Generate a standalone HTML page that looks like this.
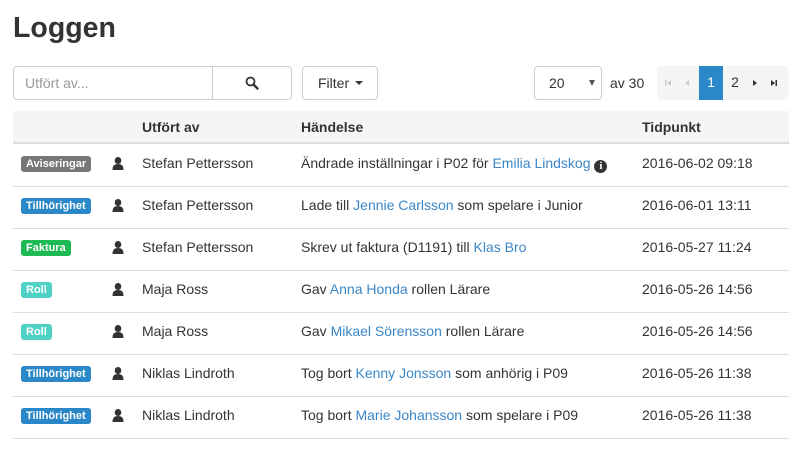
<!DOCTYPE html>
<html><head><meta charset="utf-8"><style>
*{box-sizing:border-box;margin:0;padding:0}
body{width:800px;height:450px;background:#fff;font-family:"Liberation Sans",Arial,sans-serif;font-size:14px;color:#333;position:relative;overflow:hidden}
.a{position:absolute;white-space:nowrap}
h1{position:absolute;left:13px;top:12px;font-size:28.5px;font-weight:bold;color:#333}
.box{position:absolute;border:1px solid #ccc;border-radius:4px;background:#fff}
.hdr{position:absolute;left:13px;top:111px;width:776px;height:33px;background:#f5f5f5;border-bottom:2px solid #ddd}
.th{position:absolute;top:119px;font-weight:bold}
.line{position:absolute;left:13px;width:776px;height:1px;background:#ddd}
.badge{position:absolute;left:21px;height:16px;line-height:16px;padding:0 5px;border-radius:3px;color:#fff;font-size:11px;font-weight:bold}
a{color:#3b87c8;text-decoration:none}
.pg{position:absolute;top:66px;height:33px;line-height:33px;text-align:center;font-size:14px}
</style></head><body>
<h1>Loggen</h1>
<div class="box" style="left:13px;top:66px;width:279px;height:34px"></div>
<div class="a" style="left:212px;top:67px;width:1px;height:32px;background:#ccc"></div>
<div class="a" style="left:25px;top:75px;color:#999">Utfört av...</div>
<svg class="a" style="left:245px;top:76px" width="14" height="14" viewBox="0 0 14 14"><circle cx="5.5" cy="5.5" r="4" fill="none" stroke="#333" stroke-width="1.8"/><path d="M8.5 8.5L12.5 12.5" stroke="#333" stroke-width="2.4" stroke-linecap="round"/></svg>
<div class="box" style="left:302px;top:66px;width:76px;height:34px"></div>
<div class="a" style="left:318px;top:75px">Filter</div>
<div class="a" style="left:355px;top:81px;width:0;height:0;border-left:4px solid transparent;border-right:4px solid transparent;border-top:4px solid #333"></div>
<div class="box" style="left:534px;top:66px;width:68px;height:34px"></div>
<div class="a" style="left:549px;top:75px">20</div>
<div class="a" style="left:589px;top:80px;width:0;height:0;border-left:3.5px solid transparent;border-right:3.5px solid transparent;border-top:6px solid #555"></div>
<div class="a" style="left:610px;top:75px">av 30</div>
<div class="a" style="left:657px;top:66px;width:132px;height:34px;background:#f5f5f5;border-radius:4px"></div>
<div class="a" style="left:699px;top:66px;width:24px;height:34px;background:#2a88c8"></div>
<div class="pg" style="left:699px;width:24px;color:#fff">1</div>
<div class="pg" style="left:723px;width:24px">2</div>
<svg class="a" style="left:663px;top:78px" width="120" height="10" viewBox="0 0 120 10">
<g fill="#ccc"><rect x="2" y="2" width="1.5" height="6"/><path d="M8 2v6L4 5z"/><path d="M26 2v6L22 5z"/></g>
<g fill="#333"><path d="M90 2v6l4-3z"/><path d="M108 2v6l4-3z"/><rect x="112.5" y="2" width="1.5" height="6"/></g>
</svg>
<div class="hdr"></div>
<div class="th" style="left:142px">Utfört av</div>
<div class="th" style="left:301px">Händelse</div>
<div class="th" style="left:642px">Tidpunkt</div>

<div class="badge" style="top:156px;background:#777">Aviseringar</div>
<div class="badge" style="top:198px;background:#2a88c8">Tillhörighet</div>
<div class="badge" style="top:240px;background:#1cb955">Faktura</div>
<div class="badge" style="top:282px;background:#4fd1c5">Roll</div>
<div class="badge" style="top:324px;background:#4fd1c5">Roll</div>
<div class="badge" style="top:366px;background:#2a88c8">Tillhörighet</div>
<div class="badge" style="top:408px;background:#2a88c8">Tillhörighet</div>

<svg class="a" style="left:112px;top:157px" width="12" height="270" viewBox="0 0 12 270">
<defs><g id="u"><ellipse cx="6" cy="3.5" rx="3.3" ry="3.5" fill="#333"/><path d="M0.5 13c0-4 1.5-6 5.5-6s5.5 2 5.5 6z" fill="#333"/></g></defs>
<use href="#u" y="0"/><use href="#u" y="42"/><use href="#u" y="84"/><use href="#u" y="126"/><use href="#u" y="168"/><use href="#u" y="210"/><use href="#u" y="252"/>
</svg>

<div class="a" style="left:142px;top:155px">Stefan Pettersson</div>
<div class="a" style="left:142px;top:197px">Stefan Pettersson</div>
<div class="a" style="left:142px;top:239px">Stefan Pettersson</div>
<div class="a" style="left:142px;top:281px">Maja Ross</div>
<div class="a" style="left:142px;top:323px">Maja Ross</div>
<div class="a" style="left:142px;top:365px">Niklas Lindroth</div>
<div class="a" style="left:142px;top:407px">Niklas Lindroth</div>

<div class="a" style="left:301px;top:155px">Ändrade inställningar i P02 för <a>Emilia Lindskog</a> <span style="display:inline-block;width:13px;height:13px;border-radius:50%;background:#333;color:#fff;font-size:11px;font-weight:bold;line-height:13px;text-align:center;font-family:'Liberation Serif',serif;vertical-align:-1px">i</span></div>
<div class="a" style="left:301px;top:197px">Lade till <a>Jennie Carlsson</a> som spelare i Junior</div>
<div class="a" style="left:301px;top:239px">Skrev ut faktura (D1191) till <a>Klas Bro</a></div>
<div class="a" style="left:301px;top:281px">Gav <a>Anna Honda</a> rollen Lärare</div>
<div class="a" style="left:301px;top:323px">Gav <a>Mikael Sörensson</a> rollen Lärare</div>
<div class="a" style="left:301px;top:365px">Tog bort <a>Kenny Jonsson</a> som anhörig i P09</div>
<div class="a" style="left:301px;top:407px">Tog bort <a>Marie Johansson</a> som spelare i P09</div>

<div class="a" style="left:642px;top:155px">2016-06-02 09:18</div>
<div class="a" style="left:642px;top:197px">2016-06-01 13:11</div>
<div class="a" style="left:642px;top:239px">2016-05-27 11:24</div>
<div class="a" style="left:642px;top:281px">2016-05-26 14:56</div>
<div class="a" style="left:642px;top:323px">2016-05-26 14:56</div>
<div class="a" style="left:642px;top:365px">2016-05-26 11:38</div>
<div class="a" style="left:642px;top:407px">2016-05-26 11:38</div>

<div class="line" style="top:186px"></div>
<div class="line" style="top:228px"></div>
<div class="line" style="top:270px"></div>
<div class="line" style="top:312px"></div>
<div class="line" style="top:354px"></div>
<div class="line" style="top:396px"></div>
<div class="line" style="top:438px"></div>
</body></html>
